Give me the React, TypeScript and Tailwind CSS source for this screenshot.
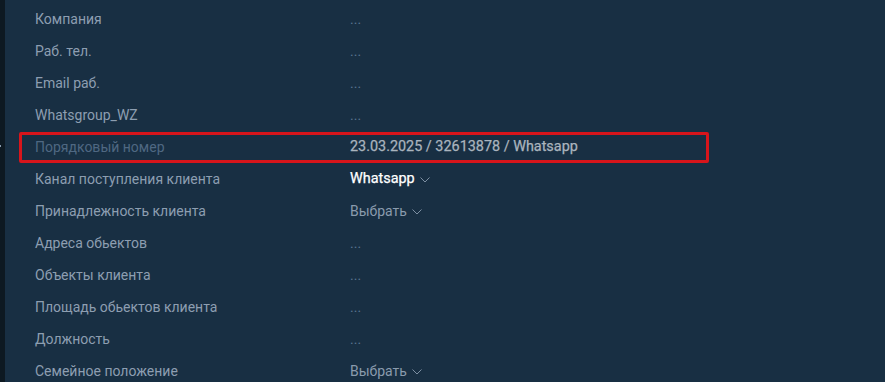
import React from "react";

type Row = { label: string; value: React.ReactNode; dim?: boolean; hl?: boolean };

const Chevron = ({ color }: { color: string }) => (
  <svg width="10" height="6" viewBox="0 0 10 6" className="ml-[5px] mt-[2px]" fill="none">
    <polyline points="0.5,0.5 5,5 9.5,0.5" stroke={color} strokeWidth="1" />
  </svg>
);

const Dots = () => <span className="text-[#5a7590]">...</span>;

const rows: Row[] = [
  { label: "Компания", value: <Dots /> },
  { label: "Раб. тел.", value: <Dots /> },
  { label: "Email раб.", value: <Dots /> },
  { label: "Whatsgroup_WZ", value: <Dots /> },
  {
    label: "Порядковый номер",
    dim: true,
    hl: true,
    value: <span className="text-[#aab4be] text-[14.4px] [-webkit-text-stroke:0.25px_#aab4be]">23.03.2025 / 32613878 / Whatsapp</span>,
  },
  {
    label: "Канал поступления клиента",
    value: (
      <span className="flex items-center text-white text-[14.4px] [-webkit-text-stroke:0.25px_#ffffff]">
        Whatsapp
        <Chevron color="#7d8fa2" />
      </span>
    ),
  },
  {
    label: "Принадлежность клиента",
    value: (
      <span className="flex items-center text-[#8a9bad]">
        Выбрать
        <Chevron color="#7d8fa2" />
      </span>
    ),
  },
  { label: "Адреса обьектов", value: <Dots /> },
  { label: "Объекты клиента", value: <Dots /> },
  { label: "Площадь обьектов клиента", value: <Dots /> },
  { label: "Должность", value: <Dots /> },
  {
    label: "Семейное положение",
    value: (
      <span className="flex items-center text-[#8a9bad]">
        Выбрать
        <Chevron color="#7d8fa2" />
      </span>
    ),
  },
];

export default function App() {
  return (
    <div
      className="flex w-[885px] h-[382px] overflow-hidden bg-[#182f43] text-[14px]"
      style={{ fontFamily: "Roboto, 'Noto Sans', sans-serif" }}
    >
      <div className="relative w-[5px] shrink-0 bg-[#0d1922]">
        <div className="absolute left-0 top-[145px] w-[1px] h-[2px] bg-[#8a9bad]" />
      </div>
      <div className="ml-[14px] w-[690px] pt-[3px] flex flex-col">
        {rows.map((r, i) => (
          <div key={i} className="relative h-8 shrink-0 flex items-center pl-[16px]">
            {r.hl && (
              <div className="absolute left-0 right-0 top-[1px] h-[31px] border-[3px] border-[#d7151b] rounded-[2px]" />
            )}
            <div className={`w-[315px] shrink-0 ${r.dim ? "text-[#4f6882]" : "text-[#8d9eb1]"}`}>
              {r.label}
            </div>
            <div>{r.value}</div>
          </div>
        ))}
      </div>
    </div>
  );
}
